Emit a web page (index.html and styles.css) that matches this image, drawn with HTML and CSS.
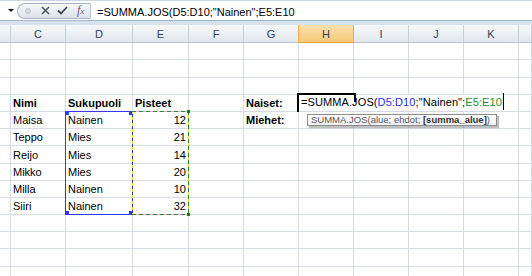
FILE: index.html
```html
<!DOCTYPE html>
<html lang="fi">
  <head>
    <meta charset="UTF-8" />
    <title>SUMMA.JOS</title>
    <link rel="stylesheet" href="styles.css">
  </head>
  <body>
    <div class="formula-bar">
      <div class="name-box"><span class="drop"></span></div>
      <div class="buttons">
        <span class="dot"></span>
        <svg class="btn-x" width="9" height="9" viewBox="0 0 9 9"><path d="M1 1L8 8M8 1L1 8" stroke="#4f5966" stroke-width="1.6" fill="none"/></svg>
        <svg class="btn-ok" width="11" height="9" viewBox="0 0 11 9"><path d="M1 4.5L4 7.5L10 1" stroke="#3c4652" stroke-width="1.8" fill="none"/></svg>
        <span class="fx">f<small>x</small></span>
      </div>
      <div class="formula">=SUMMA.JOS(D5:D10;"Nainen";E5:E10</div>
    </div>
    <div class="bar-edge"></div>

    <div class="sheet">
      <div class="hd"></div><div class="hd">C</div><div class="hd">D</div><div class="hd">E</div><div class="hd">F</div><div class="hd">G</div><div class="hd sel">H</div><div class="hd">I</div><div class="hd">J</div><div class="hd">K</div><div class="hd"></div>

      <div class="c"></div><div class="c"></div><div class="c"></div><div class="c"></div><div class="c"></div><div class="c"></div><div class="c"></div><div class="c"></div><div class="c"></div><div class="c"></div><div class="c"></div>
      <div class="c"></div><div class="c"></div><div class="c"></div><div class="c"></div><div class="c"></div><div class="c"></div><div class="c"></div><div class="c"></div><div class="c"></div><div class="c"></div><div class="c"></div>
      <div class="c"></div><div class="c"></div><div class="c"></div><div class="c"></div><div class="c"></div><div class="c"></div><div class="c"></div><div class="c"></div><div class="c"></div><div class="c"></div><div class="c"></div>

      <div class="c"></div><div class="c b">Nimi</div><div class="c b">Sukupuoli</div><div class="c b">Pisteet</div><div class="c"></div><div class="c b">Naiset:</div><div class="c"></div><div class="c"></div><div class="c"></div><div class="c"></div><div class="c"></div>
      <div class="c"></div><div class="c">Maisa</div><div class="c">Nainen</div><div class="c n">12</div><div class="c"></div><div class="c b">Miehet:</div><div class="c"></div><div class="c"></div><div class="c"></div><div class="c"></div><div class="c"></div>
      <div class="c"></div><div class="c">Teppo</div><div class="c">Mies</div><div class="c n">21</div><div class="c"></div><div class="c"></div><div class="c"></div><div class="c"></div><div class="c"></div><div class="c"></div><div class="c"></div>
      <div class="c"></div><div class="c">Reijo</div><div class="c">Mies</div><div class="c n">14</div><div class="c"></div><div class="c"></div><div class="c"></div><div class="c"></div><div class="c"></div><div class="c"></div><div class="c"></div>
      <div class="c"></div><div class="c">Mikko</div><div class="c">Mies</div><div class="c n">20</div><div class="c"></div><div class="c"></div><div class="c"></div><div class="c"></div><div class="c"></div><div class="c"></div><div class="c"></div>
      <div class="c"></div><div class="c">Milla</div><div class="c">Nainen</div><div class="c n">10</div><div class="c"></div><div class="c"></div><div class="c"></div><div class="c"></div><div class="c"></div><div class="c"></div><div class="c"></div>
      <div class="c"></div><div class="c">Siiri</div><div class="c">Nainen</div><div class="c n">32</div><div class="c"></div><div class="c"></div><div class="c"></div><div class="c"></div><div class="c"></div><div class="c"></div><div class="c"></div>

      <div class="c"></div><div class="c"></div><div class="c"></div><div class="c"></div><div class="c"></div><div class="c"></div><div class="c"></div><div class="c"></div><div class="c"></div><div class="c"></div><div class="c"></div>
      <div class="c"></div><div class="c"></div><div class="c"></div><div class="c"></div><div class="c"></div><div class="c"></div><div class="c"></div><div class="c"></div><div class="c"></div><div class="c"></div><div class="c"></div>
      <div class="c"></div><div class="c"></div><div class="c"></div><div class="c"></div><div class="c"></div><div class="c"></div><div class="c"></div><div class="c"></div><div class="c"></div><div class="c"></div><div class="c"></div>
      <div class="c"></div><div class="c"></div><div class="c"></div><div class="c"></div><div class="c"></div><div class="c"></div><div class="c"></div><div class="c"></div><div class="c"></div><div class="c"></div><div class="c"></div>

      <!-- range highlights and the in-cell editor sit over the grid -->
      <div class="ref-blue"><i class="tl"></i><i class="tr"></i><i class="bl"></i><i class="br"></i></div>
      <div class="ref-green"><i class="tr"></i><i class="br"></i></div>
      <div class="editor">=SUMMA.JOS(<span class="ref1">D5:D10</span>;"Nainen";<span class="ref2">E5:E10</span><span class="caret"></span></div>
      <div class="active"></div>
      <div class="tip">SUMMA.JOS(alue; ehdot; <b>[summa_alue]</b>)</div>
    </div>
  </body>
</html>
```

FILE: styles.css
```css
* {
  box-sizing: border-box;
}
body {
  margin: 0;
  width: 532px;
  height: 276px;
  overflow: hidden;
  background: #ffffff;
  font-family: "Liberation Sans", Arial, sans-serif;
  font-size: 11px;
  color: #000000;
}

/* formula bar */
.formula-bar {
  display: flex;
  align-items: center;
  height: 20px;
  border-top: 1px solid #c9d6e6;
}
.name-box {
  width: 17px;
  display: flex;
  align-items: center;
  padding-left: 8px;
}
.drop {
  border-top: 3px solid #1a1a1a;
  border-left: 3px solid transparent;
  border-right: 3px solid transparent;
}
.buttons {
  width: 74px;
  height: 16px;
  display: flex;
  align-items: center;
  border: 1px solid #a9b7c9;
  border-right-color: #bcc7d4;
  border-radius: 8px 0 0 8px;
  background: linear-gradient(#f6f8fb, #dce2ea);
}
.dot {
  width: 6px;
  height: 6px;
  margin-left: 7px;
  border-radius: 50%;
  background: #d5dae1;
  border: 1px solid #b9c1cc;
}
.btn-x {
  margin-left: 10px;
}
.btn-ok {
  margin-left: 7px;
}
.fx {
  margin-left: 9px;
  font-family: "Liberation Serif", serif;
  font-style: italic;
  font-size: 12px;
  color: #5b636e;
}
.fx small {
  font-size: 9px;
}
.formula {
  align-self: stretch;
  padding: 5px 0 0 6px;
  line-height: 13px;
  white-space: nowrap;
}
.bar-edge {
  height: 5px;
  border-top: 1px solid #a4b6cb;
  background: #d8e2ee;
}

/* sheet grid */
.sheet {
  position: relative;
  display: grid;
  grid-template-columns: 11px 55px 67px 56px 55px 55px 55px 55px 55px 55px 1fr;
  grid-template-rows: 18px 17px 18px 17px 17px 17px 17px 18px 17px 17px 17px 17px 17px 18px 17px;
}
.hd {
  display: flex;
  align-items: center;
  justify-content: center;
  border-right: 1px solid #c5cedb;
  border-bottom: 1px solid #b8c5d6;
  background: linear-gradient(#f7f9fb, #e2e7ee);
  color: #2e4260;
}
.hd.sel {
  background: linear-gradient(#fbe1ac, #f6c978);
  border-right-color: #f0a848;
  border-bottom-color: #ee9f3c;
  box-shadow: -1px 0 0 #f0a848;
}
.c {
  display: flex;
  align-items: flex-end;
  padding: 0 2px 1px;
  line-height: 13px;
  white-space: nowrap;
  border-right: 1px solid #d6dce7;
  border-bottom: 1px solid #d6dce7;
}
.b {
  font-weight: bold;
}
.n {
  justify-content: flex-end;
}

/* referenced ranges */
.ref-blue {
  position: absolute;
  grid-column: 3 / 4;
  grid-row: 6 / 12;
  top: -1px;
  left: -1px;
  right: 0;
  bottom: 0;
  border: 1px solid #3535f5;
}
.ref-blue i,
.ref-green i {
  position: absolute;
  width: 4px;
  height: 4px;
  background: #3535f5;
}
.ref-green i {
  width: 3px;
  height: 3px;
  background: #1d7a1d;
}
.tl { top: -1px; left: -1px; }
.tr { top: -1px; right: -1px; }
.bl { bottom: -1px; left: -1px; }
.br { bottom: -1px; right: -1px; }

.ref-green {
  position: absolute;
  grid-column: 4 / 5;
  grid-row: 6 / 12;
  top: -1px;
  left: -1px;
  right: 0;
  bottom: 0;
  background:
    repeating-linear-gradient(90deg, #2b8a2b 0 4px, #e2a6ea 4px 7px) top left / 100% 1px no-repeat,
    repeating-linear-gradient(90deg, #2b8a2b 0 4px, #e2a6ea 4px 7px) bottom left / 100% 1px no-repeat,
    repeating-linear-gradient(#d9d23a 0 3px, #2e3b9a 3px 6px) top left / 1px 100% no-repeat,
    repeating-linear-gradient(#2b8a2b 0 4px, #e0d040 4px 7px) top right / 1px 100% no-repeat;
}

/* in-cell editing */
.editor {
  position: absolute;
  grid-column: 7 / 8;
  grid-row: 5 / 6;
  top: 0;
  left: 0;
  width: 208px;
  height: 16px;
  padding: 1px 0 0 2px;
  background: #ffffff;
  line-height: 13px;
  letter-spacing: 0.1px;
  white-space: nowrap;
}
.ref1 {
  color: #2d2df0;
}
.ref2 {
  color: #23902d;
}
.caret {
  display: inline-block;
  width: 1px;
  height: 17px;
  margin: -3px 0 -1px 1px;
  vertical-align: top;
  background: #000000;
}
.active {
  position: absolute;
  grid-column: 7 / 8;
  grid-row: 5 / 6;
  top: -2px;
  left: -2px;
  width: 59px;
  height: 19px;
  border-top: 2px solid #000000;
  border-left: 2px solid #000000;
}
.active::after {
  content: "";
  position: absolute;
  top: -2px;
  right: 0;
  width: 2px;
  height: 9px;
  background: #000000;
}
.tip {
  position: absolute;
  grid-column: 7 / 8;
  grid-row: 6 / 7;
  top: 2px;
  left: 8px;
  width: 190px;
  height: 12px;
  padding: 0 3px;
  border: 1px solid #8c8c8c;
  background: linear-gradient(#ffffff, #eef0f3);
  box-shadow: 2px 2px 1px rgba(0, 0, 0, 0.25);
  color: #5a5a5a;
  font-size: 9.5px;
  line-height: 10px;
  white-space: nowrap;
}
.tip b {
  color: #333333;
}
```
